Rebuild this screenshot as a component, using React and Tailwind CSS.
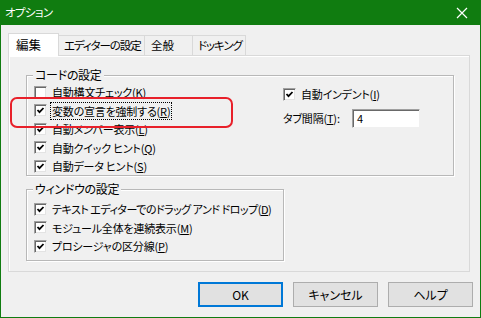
import React from "react";

const font = {
  fontFamily: '"Noto Sans CJK JP", "Noto Sans", sans-serif',
};

function Check({ checked }) {
  return (
    <span className="w-[13px] h-[13px] shrink-0 bg-white border border-[#a0a0a0] border-r-[#f0f0f0] border-b-[#f0f0f0] shadow-[inset_1px_1px_0_#696969,inset_-1px_-1px_0_#e3e3e3] flex items-center justify-center">
      {checked && (
        <svg width="9" height="9" viewBox="0 0 9 9">
          <path d="M1.5 4 L3.5 6.2 L7.5 2" fill="none" stroke="#000" strokeWidth="1.8" />
        </svg>
      )}
    </span>
  );
}

function Mn({ pre, k, focus }) {
  return (
    <span className={focus ? "outline-1 outline-dotted outline-black px-[1px] -mx-[1px]" : ""}>
      {pre}(<span className="underline underline-offset-1">{k}</span>)
    </span>
  );
}

function Row({ checked, pre, k, focus, tight }) {
  return (
    <div
      className={
        "h-[18.5px] shrink-0 flex items-center gap-[5px] whitespace-nowrap " +
        (tight ? "tracking-[-0.5px]" : "tracking-[-0.2px]")
      }
    >
      <Check checked={checked} />
      <Mn pre={pre} k={k} focus={focus} />
    </div>
  );
}

function Group({ title, className, children }) {
  return (
    <div className={"relative border border-[#b8b8b8] shadow-[1px_1px_0_#fff,inset_1px_1px_0_#fff] " + className}>
      <span className="absolute -top-[9px] left-[6px] bg-[#f0f0f0] px-[2px] leading-[16px] text-[12px] tracking-[-0.3px] whitespace-nowrap">
        {title}
      </span>
      {children}
    </div>
  );
}

function Btn({ children, focused }) {
  return (
    <button
      className={
        "w-[85px] h-[25px] bg-[#e1e1e1] text-[12px] text-black flex items-center justify-center " +
        (focused ? "border-2 border-[#0078d7]" : "border border-[#adadad]")
      }
      style={font}
    >
      {children}
    </button>
  );
}

export default function App() {
  return (
    <div
      className="w-[481px] h-[318px] bg-[#107c10] flex flex-col px-[1px] pb-[1px] text-[11px] text-black [font-feature-settings:'palt']"
      style={font}
    >
      <div className="h-[25px] flex items-center justify-between text-white">
        <span className="pl-[4px] text-[11.5px] tracking-[-0.6px]">オプション</span>
        <svg width="12" height="12" viewBox="0 0 12 12" className="mr-[12px]">
          <path d="M1 1 L11 11 M11 1 L1 11" stroke="#fff" strokeWidth="1.2" />
        </svg>
      </div>
      <div className="flex-1 bg-[#f0f0f0] flex flex-col pt-[8px] pl-[7px] pr-[10px]">
        <div className="flex items-end h-[23px] relative z-10 whitespace-nowrap text-[11.5px] tracking-[-1.1px]">
          <div className="w-[51px] h-[23px] bg-white border border-[#d9d9d9] border-b-0 flex items-center pl-[7px] text-[12.5px] tracking-normal">
            編集
          </div>
          <div className="w-[86px] h-[21px] border border-[#d9d9d9] border-l-0 border-b-0 flex items-center pl-[5px]">
            エディターの設定
          </div>
          <div className="w-[48px] h-[21px] border border-[#d9d9d9] border-l-0 border-b-0 flex items-center pl-[6px] tracking-normal">
            全般
          </div>
          <div className="w-[53px] h-[21px] border border-[#d9d9d9] border-l-0 border-b-0 flex items-center pl-[5px]">
            ドッキング
          </div>
        </div>
        <div className="h-[217px] border border-[#d9d9d9] shadow-[inset_1px_1px_0_#fff] -mt-[1px] pt-[19px] pl-[17px] flex flex-col">
          <Group title="コードの設定" className="w-[428px] h-[101px] flex pt-[7px] pl-[7px]">
            <div className="w-[249px] flex flex-col">
              <Row checked={false} pre="自動構文チェック" k="K" />
              <Row checked pre="変数の宣言を強制する" k="R" focus />
              <Row checked pre="自動メンバー表示" k="L" />
              <Row checked pre="自動クイック ヒント" k="Q" />
              <Row checked pre="自動データ ヒント" k="S" />
            </div>
            <div className="flex flex-col pt-[2px]">
              <div className="h-[18px] flex items-center gap-[5px] whitespace-nowrap tracking-[-0.2px]">
                <Check checked />
                <Mn pre="自動インデント" k="I" />
              </div>
              <div className="flex items-center mt-[6px] whitespace-nowrap">
                <span className="w-[69px] tracking-[-0.2px]">
                  タブ間隔(<span className="underline underline-offset-1">T</span>):
                </span>
                <div className="w-[68px] h-[19px] bg-white border border-[#a0a0a0] border-r-[#f0f0f0] border-b-[#f0f0f0] shadow-[inset_1px_1px_0_#696969] pl-[4px] leading-[17px]">
                  4
                </div>
              </div>
            </div>
          </Group>
          <Group title="ウィンドウの設定" className="w-[258px] h-[72px] mt-[13px] pt-[10px] pl-[7px] flex flex-col">
            <Row checked pre="テキスト エディターでのドラッグ アンド ドロップ" k="D" tight />
            <Row checked pre="モジュール全体を連続表示" k="M" />
            <Row checked pre="プロシージャの区分線" k="P" />
          </Group>
        </div>
        <div className="flex justify-end gap-[10px] mt-[10px] -mr-[3px]">
          <Btn focused>OK</Btn>
          <Btn>キャンセル</Btn>
          <Btn>ヘルプ</Btn>
        </div>
        <div className="absolute left-[10px] top-[97px] w-[223px] h-[31px] border-2 border-[#e8202a] rounded-[7px] pointer-events-none" />
      </div>
    </div>
  );
}
